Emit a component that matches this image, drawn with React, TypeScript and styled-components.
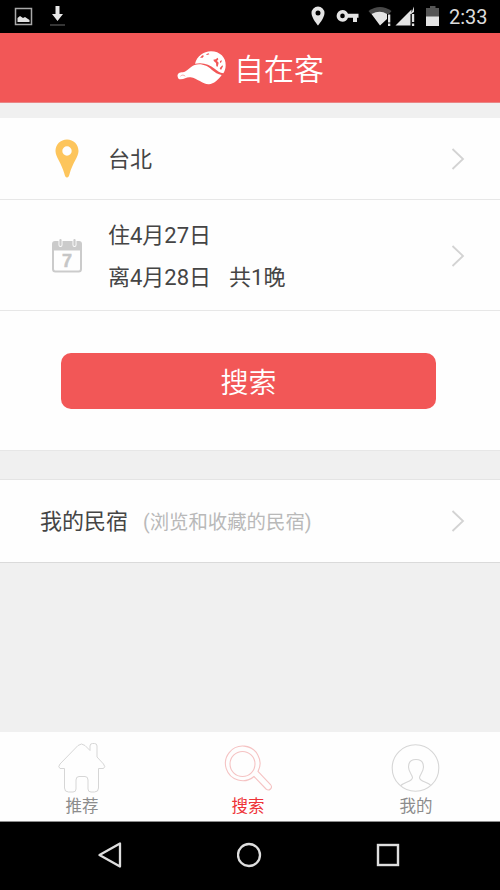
import React from "react";
import styled, { createGlobalStyle } from "styled-components";

const GlobalStyle = createGlobalStyle`
  * { box-sizing: border-box; }
  body { margin: 0; background: #f0f0f0; }
`;

const Screen = styled.div`
  width: 500px;
  height: 890px;
  display: flex;
  flex-direction: column;
  overflow: hidden;
  background: #f0f0f0;
  color: #454545;
  font-family: Roboto, "Noto Sans CJK SC", sans-serif;
  svg { display: block; flex: none; }
`;

const StatusBar = styled.div`
  height: 33px;
  flex: none;
  display: flex;
  align-items: center;
  justify-content: space-between;
  background: #000;
  padding: 0 11px 0 14px;
`;

const StatusGroup = styled.div`
  display: flex;
  align-items: center;
`;

const Clock = styled.span`
  width: 40px;
  margin-left: 9px;
  padding-top: 1px;
  color: #dcdcdc;
  font-size: 20px;
  line-height: 32px;
  white-space: nowrap;
`;

const Header = styled.header`
  height: 70px;
  flex: none;
  display: flex;
  align-items: center;
  gap: 7px;
  padding-left: 177px;
  background: #f25757;
  border-bottom: 1px solid #e98585;
`;

const Brand = styled.h1`
  margin: 0;
  padding-top: 4px;
  color: #fff;
  font-size: 30px;
  font-weight: 350;
  line-height: 40px;
`;

const Card = styled.section<{ $gap: number }>`
  flex: none;
  margin-top: ${(p) => p.$gap}px;
  background: #fefefe;
`;

const Row = styled.div<{ $height: number; $shift?: number }>`
  height: ${(p) => p.$height}px;
  display: flex;
  align-items: center;
  padding-top: ${(p) => p.$shift ?? 0}px;
  padding-right: 35px;
  border-bottom: 1px solid #e7e7e7;
`;

const RowIcon = styled.div`
  width: 108px;
  flex: none;
  display: flex;
  justify-content: center;
  padding-left: 26px;
`;

const RowText = styled.div`
  flex: 1;
  padding-top: 2px;
  font-size: 22px;
  line-height: 42px;
  white-space: nowrap;
`;

const Nights = styled.span`
  margin-left: 18px;
`;

const ButtonArea = styled.div`
  height: 140px;
  padding: 42px 64px 0 61px;
  border-bottom: 1px solid #e7e7e7;
`;

const SearchButton = styled.button`
  display: block;
  width: 100%;
  height: 56px;
  padding: 5px 0 0;
  border: 0;
  border-radius: 10px;
  background: #f25757;
  color: #fff;
  font-family: inherit;
  font-size: 28px;
  font-weight: 350;
  line-height: 51px;
`;

const StayRow = styled(Row)`
  padding-left: 40px;
  border-top: 1px solid #e4e4e4;
  border-bottom-color: #dadada;
`;

const Hint = styled.span`
  margin-left: 15px;
  color: #b9b9b9;
  font-size: 19.4px;
`;

const Tabs = styled.nav`
  height: 90px;
  flex: none;
  margin-top: auto;
  display: grid;
  grid-template-columns: 164px 1fr 168px;
  background: #fefefe;
  border-bottom: 1px solid #8d8d8d;
`;

const Tab = styled.div<{ $active?: boolean }>`
  display: flex;
  flex-direction: column;
  align-items: center;
  padding-top: 9px;
  color: ${(p) => (p.$active ? "#ee3338" : "#8c8c8c")};
  font-size: 16.5px;
  line-height: 20px;
  svg { margin-bottom: 4px; color: ${(p) => (p.$active ? "#f5c3c3" : "#d6d6d6")}; }
`;

const SystemNav = styled.div`
  height: 68px;
  flex: none;
  display: flex;
  align-items: center;
  justify-content: space-between;
  padding: 0 100px 2px 97px;
  background: #000;
`;

const Chevron = () => (
  <svg width="14" height="24" viewBox="0 0 14 24" fill="none" stroke="#d3d3d3" strokeWidth="1.8">
    <path d="M1.500 2 12 12 1.500 22" />
  </svg>
);

const CapLogo = () => (
  <svg width="50" height="35" viewBox="51 63 150 105">
    <path fill="#fff" d="M105 104C111 82 130 67 153 67C180 67 198 86 197 109C197 119 194 128 190 133C180 131 172 126 164 119C148 106 129 99 105 104Z" />
    <path fill="#fff" d="M53 143C51 134 58 130 69 130C85 126 89 113 104 108C124 102 143 111 155 122C164 130 174 136 185 138C176 151 161 165 147 166C129 167 112 148 92 145C80 143 74 151 62 151C56 151 54 148 53 143Z" />
    <path fill="none" stroke="#f25757" strokeWidth="1.500" strokeLinecap="round" d="M62 141C66 137 71 137 75 141" />
    <path fill="#f25757" d="M120 86l7-7 5 1-4 6ZM138 76l8-3 2 3-7 2ZM160 92l7-1 6-5 2 5-4 5 5 5-3 12-4-1-1-10-6-5ZM180 96l6-2-2 6-4 2ZM179 118l8-9 2 3-6 11Z" />
  </svg>
);

export default function App() {
  return (
    <Screen>
      <GlobalStyle />
      <StatusBar>
        <StatusGroup>
          <svg width="56" height="33" viewBox="14 0 56 33">
            <rect x="15.500" y="8.500" width="16" height="16" fill="none" stroke="#a9a9a9" strokeWidth="1.500" />
            <path fill="#e2e2e2" d="M17.500 22V18L20 16L23 18L25 17L29.500 20V22Z" />
            <path fill="#e8e8e8" d="M55.500 6h4v8H63l-5.500 7L52 14h3.500z" />
            <path fill="#353535" d="M50 24h15v2H50z" />
          </svg>
        </StatusGroup>
        <StatusGroup>
          <svg width="130" height="33" viewBox="310 0 130 33">
            <path fill="#e4e4e4" fillRule="evenodd" d="M318 6.500a6.500 6.500 0 0 1 6.500 6.500c0 5-6.500 12.500-6.500 12.500S311.500 18 311.500 13A6.500 6.500 0 0 1 318 6.500Zm0 4a2.500 2.500 0 1 0 0 5 2.500 2.500 0 0 0 0-5Z" />
            <path fill="#e4e4e4" fillRule="evenodd" d="M342.500 10c2.600 0 4.500 1.500 5.500 3.800h10.500v4H357V22h-4v-4.200h-5c-1 2.500-3 4-5.500 4a5.900 5.900 0 0 1 0-11.800Zm0 3.600a2.300 2.300 0 1 0 0 4.600 2.300 2.300 0 0 0 0-4.600Z" />
            <path fill="#494949" d="M368.500 11Q380 3 391.500 11L389 14H371Z" />
            <path fill="#e4e4e4" d="M371.500 14Q380 9.500 387 14v5L380 25.500ZM388 14.500h2.300v8H388zM388 23.500h2.300V26H388zM395.500 25.500 411.500 9.500V25.500ZM414 6.500V12l-3 2Z" />
            <path fill="#000" d="M410.500 14h1.200v12h-1.200z" />
            <path fill="#e4e4e4" d="M412 14h2.200v8H412zM412 23.500h2.200V26H412z" />
            <path fill="#555" d="M430 6h5.500v2h3.500v9h-13V8h4z" />
            <path fill="#e4e4e4" d="M426 16.500h13V26h-13z" />
          </svg>
          <Clock>2:33</Clock>
        </StatusGroup>
      </StatusBar>

      <Header>
        <CapLogo />
        <Brand>自在客</Brand>
      </Header>

      <Card $gap={15}>
        <Row $height={82}>
          <RowIcon>
            <svg width="24" height="39" viewBox="0 0 24 39">
              <path fill="#fdc55c" fillRule="evenodd" d="M12 .5C18.500.5 23.500 5.500 23.500 12c0 6-6 12-8.800 22.500C14 37 13.500 38.500 12 38.500S10 37 9.300 34.500C6.500 24 .5 18 .5 12 .5 5.500 5.500.5 12 .5Zm0 6.800a4.700 4.700 0 1 0 0 9.400 4.700 4.700 0 0 0 0-9.400Z" />
            </svg>
          </RowIcon>
          <RowText>台北</RowText>
          <Chevron />
        </Row>
        <Row $height={111} $shift={2}>
          <RowIcon>
            <svg width="32" height="36" viewBox="0 0 32 36">
              <path fill="none" stroke="#cbcbcb" strokeWidth="2" d="M2 10V31Q2 33.500 4.500 33.500H27.500Q30 33.500 30 31V10" />
              <path fill="#cbcbcb" d="M1 12.500V6Q1 3 4 3H28Q31 3 31 6V12.500Z" />
              <path stroke="#fefefe" strokeWidth="4" strokeLinecap="round" d="M9.500 3V7M23.500 3V7" />
              <path stroke="#cbcbcb" strokeWidth="2.200" strokeLinecap="round" d="M9.500 2V7M23.500 2V7" />
              <text x="16" y="29" textAnchor="middle" fill="#c6c6c6" stroke="#c6c6c6" strokeWidth=".5" fontFamily="Liberation Sans, sans-serif" fontWeight="700" fontSize="18">7</text>
            </svg>
          </RowIcon>
          <RowText>
            <div>住4月27日</div>
            <div>离4月28日<Nights>共1晚</Nights></div>
          </RowText>
          <Chevron />
        </Row>
        <ButtonArea>
          <SearchButton>搜索</SearchButton>
        </ButtonArea>
      </Card>

      <Card $gap={28}>
        <StayRow $height={84}>
          <RowText>
            我的民宿<Hint>(浏览和收藏的民宿)</Hint>
          </RowText>
          <Chevron />
        </StayRow>
      </Card>

      <Tabs>
        <Tab>
          <svg width="50" height="52" viewBox="0 0 50 52" fill="none" stroke="currentColor" strokeWidth="1">
            <path d="M7.500 27.500H3Q.5 26 3 23L21 4.500Q24.500 1.500 28 4.500L33 9.500V5Q33 2.500 35.500 2.500H37.500Q40 2.500 40 5V16L46.500 23Q49 26 46.500 27.500H41.500V47Q41.500 51 37.500 51H34Q31 51 31 48V39Q31 35.500 28 35.500H22Q19 35.500 19 39V48Q19 51 16 51H11.500Q7.500 51 7.500 47Z" />
          </svg>
          推荐
        </Tab>
        <Tab $active>
          <svg width="50" height="52" viewBox="0 0 50 52" fill="none" stroke="currentColor" strokeWidth="1.100">
            <circle cx="19.500" cy="23" r="12.500" />
            <path d="M31 35.500A17.300 17.300 0 1 1 35 30.500L47.500 43.500Q49.500 46 47.500 48T43 48Z" />
          </svg>
          搜索
        </Tab>
        <Tab>
          <svg width="50" height="52" viewBox="0 0 50 52" fill="none" stroke="currentColor" strokeWidth="1.100">
            <circle cx="24.500" cy="27" r="23.300" />
            <path d="M9.500 45C13 40.500 21.500 41 21.500 36.500C21 33.500 17.500 30.500 17.500 26Q17.500 18.500 25 18.500T32.500 26C32.500 30.500 29 33.500 28.500 36.500C28.500 41 36.500 40.500 40 44.500" />
          </svg>
          我的
        </Tab>
      </Tabs>

      <SystemNav>
        <svg width="26" height="28" viewBox="0 0 26 28" fill="none" stroke="#dedede" strokeWidth="2.300" strokeLinejoin="round">
          <path d="M2.500 14 23 2.500V25.500Z" />
        </svg>
        <svg width="26" height="26" viewBox="0 0 26 26" fill="none" stroke="#dedede" strokeWidth="2.300">
          <circle cx="12" cy="13" r="11" />
        </svg>
        <svg width="24" height="24" viewBox="0 0 24 24" fill="none" stroke="#dedede" strokeWidth="2.400">
          <rect x="2" y="2" width="20" height="20" />
        </svg>
      </SystemNav>
    </Screen>
  );
}
